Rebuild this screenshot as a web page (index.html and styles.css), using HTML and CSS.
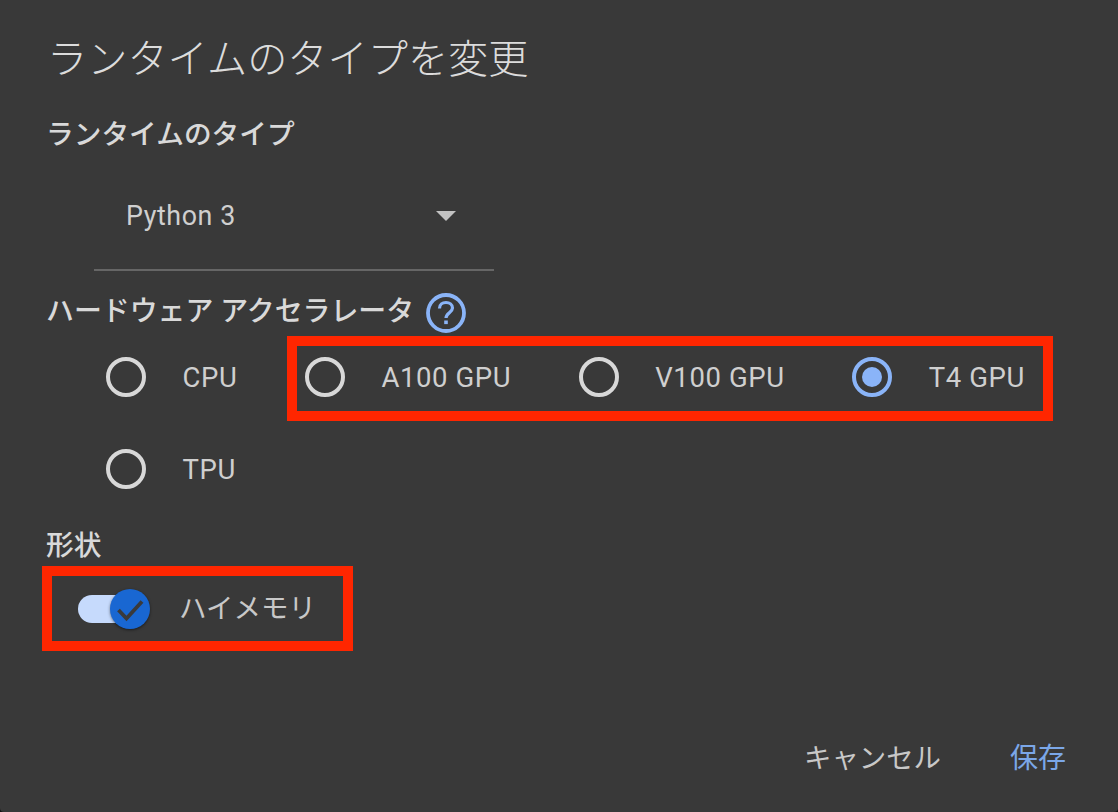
FILE: index.html
```html
<!DOCTYPE html>
<html lang="ja">
<head>
<meta charset="utf-8">
<title>ランタイムのタイプを変更</title>
<link rel="stylesheet" href="styles.css">
</head>
<body>
<main class="dialog">
  <h1 class="title">ランタイムのタイプを変更</h1>
  <h2 class="heading heading-runtime">ランタイムのタイプ</h2>
  <div class="select">
    <span class="select-value">Python 3</span>
    <span class="select-arrow"></span>
  </div>
  <div class="heading heading-hw">
    <span>ハードウェア アクセラレータ</span>
    <svg class="help" width="40" height="40" viewBox="0 0 40 40" aria-hidden="true">
      <circle cx="20" cy="20" r="18" fill="none" stroke="#8ab4f8" stroke-width="3.800"/>
      <path d="M13.500 15.500c0-3.800 3-6 6.500-6s6.500 2.200 6.500 5.500c0 4.500-6.500 5-6.500 10" fill="none" stroke="#8ab4f8" stroke-width="3.200"/>
      <rect x="18.200" y="27.500" width="3.600" height="3.600" fill="#8ab4f8"/>
    </svg>
  </div>
  <div class="radios">
    <label class="radio-item"><span class="radio"></span><span>CPU</span></label>
    <label class="radio-item"><span class="radio"></span><span>A100 GPU</span></label>
    <label class="radio-item"><span class="radio"></span><span>V100 GPU</span></label>
    <label class="radio-item"><span class="radio radio-on"></span><span>T4 GPU</span></label>
    <label class="radio-item"><span class="radio"></span><span>TPU</span></label>
  </div>
  <h2 class="heading heading-shape">形状</h2>
  <div class="switch-row">
    <span class="switch">
      <span class="switch-track"></span>
      <span class="switch-knob">
        <svg width="40" height="40" viewBox="0 0 40 40" aria-hidden="true">
          <path d="M8.500 21l8 8.500L32 12.500" fill="none" stroke="#3a3a3a" stroke-width="3.800"/>
        </svg>
      </span>
    </span>
    <span class="switch-label">ハイメモリ</span>
  </div>
  <div class="actions">
    <span class="btn">キャンセル</span>
    <span class="btn btn-primary">保存</span>
  </div>
  <div class="mark mark-gpu"></div>
  <div class="mark mark-mem"></div>
</main>
</body>
</html>
```
FILE: styles.css
```css
* { box-sizing: border-box; }
html, body { margin: 0; height: 100%; background: #111; }
body {
  width: 1118px;
  height: 812px;
  overflow: hidden;
  font-family: Roboto, "Noto Sans CJK JP", sans-serif;
  color: #d6d6d6;
}
.dialog {
  position: relative;
  width: 1118px;
  height: 812px;
  padding: 0 0 0 46px;
  background: #393939;
  border-radius: 0 0 4px 4px;
  display: flex;
  flex-direction: column;
}
.title {
  margin: 36px 0 0 1px;
  height: 48px;
  line-height: 48px;
  font-size: 40.200px;
  font-weight: 300;
  color: #dcdcdc;
}
.heading {
  margin: 0;
  font-size: 27.700px;
  font-weight: 500;
  line-height: 40px;
  color: #d9d9d9;
}
.heading-runtime { margin-top: 31px; }
.select {
  width: 400px;
  height: 100px;
  margin: 16px 0 0 48px;
  padding: 0 38px 9px 32px;
  border-bottom: 2px solid #666;
  display: flex;
  align-items: center;
  justify-content: space-between;
}
.select-value {
  font-size: 26.800px;
  letter-spacing: 0.6px;
  color: #cfcfcf;
}
.select-arrow {
  width: 0;
  height: 0;
  border-left: 10px solid transparent;
  border-right: 10px solid transparent;
  border-top: 10px solid #c2c2c2;
}
.heading-hw {
  margin-top: 19px;
  display: flex;
  align-items: center;
  gap: 12px;
  font-size: 27.900px;
}
.help { margin-top: 3px; }
.radios {
  margin: 24px 0 0 60px;
  width: 960px;
  display: flex;
  flex-wrap: wrap;
  column-gap: 67.500px;
  row-gap: 52px;
}
.radio-item {
  display: flex;
  align-items: center;
  gap: 36.500px;
  height: 40px;
  font-size: 27.500px;
  letter-spacing: 0.6px;
  color: #cfcfcf;
}
.radio {
  position: relative;
  width: 40px;
  height: 40px;
  flex: none;
  border: 4px solid #d8d8d8;
  border-radius: 50%;
}
.radio-on { border-color: #8ab4f8; }
.radio-on::after {
  content: "";
  position: absolute;
  inset: 6px;
  border-radius: 50%;
  background: #8ab4f8;
}
.heading-shape { margin-top: 37px; }
.switch-row {
  margin: 23px 0 0 32px;
  display: flex;
  align-items: center;
  height: 40px;
  gap: 29px;
}
.switch {
  position: relative;
  width: 72px;
  height: 40px;
  flex: none;
  display: flex;
  align-items: center;
}
.switch-track {
  width: 60px;
  height: 28px;
  border-radius: 14px;
  background: #c6dafc;
}
.switch-knob {
  position: absolute;
  left: 32px;
  top: 0;
  width: 40px;
  height: 40px;
  border-radius: 50%;
  background: #1967d2;
  box-shadow: 0 1px 3px rgba(0, 0, 0, 0.5);
}
.switch-knob svg { display: block; }
.switch-label {
  font-size: 27.500px;
  line-height: 32px;
  color: #c8c8c8;
}
.actions {
  margin-top: auto;
  margin-bottom: 33px;
  padding-right: 52px;
  display: flex;
  justify-content: flex-end;
  align-items: center;
  gap: 69px;
  line-height: 40px;
}
.btn {
  font-size: 27.400px;
  color: #c8c8c8;
}
.btn-primary {
  font-size: 28px;
  color: #7ba7e8;
}
.mark {
  position: absolute;
  border: 10px solid #ff2600;
}
.mark-gpu { left: 287px; top: 336px; width: 766px; height: 85px; }
.mark-mem { left: 42px; top: 566px; width: 311px; height: 85px; }
```
